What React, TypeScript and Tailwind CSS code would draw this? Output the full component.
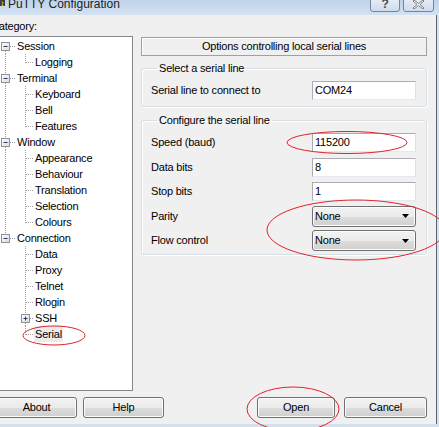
import React from 'react';

type Root = { label: string; children: { label: string; plus?: boolean; selected?: boolean }[] };

const tree: Root[] = [
  { label: 'Session', children: [{ label: 'Logging' }] },
  { label: 'Terminal', children: [{ label: 'Keyboard' }, { label: 'Bell' }, { label: 'Features' }] },
  {
    label: 'Window',
    children: [
      { label: 'Appearance' },
      { label: 'Behaviour' },
      { label: 'Translation' },
      { label: 'Selection' },
      { label: 'Colours' },
    ],
  },
  {
    label: 'Connection',
    children: [
      { label: 'Data' },
      { label: 'Proxy' },
      { label: 'Telnet' },
      { label: 'Rlogin' },
      { label: 'SSH', plus: true },
      { label: 'Serial', selected: true },
    ],
  },
];

const dot = { stroke: '#a0a0a0', strokeWidth: 1, strokeDasharray: '1 1' };

function Expander({ x, open }: { x: number; open: boolean }) {
  return (
    <g>
      <defs>
        <linearGradient id="exp" x1="0" y1="0" x2="1" y2="1">
          <stop offset="0" stopColor="#ffffff" />
          <stop offset="1" stopColor="#d8d8d8" />
        </linearGradient>
      </defs>
      <rect x={x + 0.5} y={4.5} width={8} height={8} fill="url(#exp)" stroke="#919191" />
      <line x1={x + 2.5} y1={8.5} x2={x + 6.5} y2={8.5} stroke="#1f3c6b" />
      {!open && <line x1={x + 4.5} y1={6.5} x2={x + 4.5} y2={10.5} stroke="#1f3c6b" />}
    </g>
  );
}

function RootGutter({ first, last }: { first: boolean; last: boolean }) {
  return (
    <svg width="17" height="16" className="shrink-0">
      {!first && <line x1="5.5" y1="0" x2="5.5" y2="4" {...dot} />}
      {!last && <line x1="5.5" y1="13" x2="5.5" y2="16" {...dot} />}
      <line x1="10" y1="8.5" x2="16" y2="8.5" {...dot} />
      <Expander x={1} open />
    </svg>
  );
}

function ChildGutter({ trunk, last, plus }: { trunk: boolean; last: boolean; plus?: boolean }) {
  return (
    <svg width="35" height="16" className="shrink-0">
      {trunk && <line x1="5.5" y1="0" x2="5.5" y2="16" {...dot} />}
      {plus ? (
        <>
          <line x1="25.5" y1="0" x2="25.5" y2="4" {...dot} />
          {!last && <line x1="25.5" y1="13" x2="25.5" y2="16" {...dot} />}
          <line x1="30" y1="8.5" x2="34" y2="8.5" {...dot} />
          <Expander x={21} open={false} />
        </>
      ) : (
        <>
          <line x1="25.5" y1="0" x2="25.5" y2={last ? 9 : 16} {...dot} />
          <line x1="26" y1="8.5" x2="34" y2="8.5" {...dot} />
        </>
      )}
    </svg>
  );
}

function Tree() {
  return (
    <div className="h-[355px] w-[133px] border border-l-0 border-[#828790] bg-white pt-px">
      {tree.map((root, ri) => (
        <div key={root.label}>
          <div className="flex h-4 items-center">
            <RootGutter first={ri === 0} last={ri === tree.length - 1} />
            <span className="leading-4">{root.label}</span>
          </div>
          {root.children.map((c, ci) => (
            <div key={c.label} className="flex h-4 items-center">
              <ChildGutter trunk={ri !== tree.length - 1} last={ci === root.children.length - 1} plus={c.plus} />
              <span className={c.selected ? 'bg-[#ebebeb] px-px leading-4 -ml-px' : 'leading-4'}>{c.label}</span>
            </div>
          ))}
        </div>
      ))}
    </div>
  );
}

const btn =
  'h-[21px] rounded-[3px] border border-[#707070] bg-[linear-gradient(to_bottom,#f2f2f2_0%,#ebebeb_50%,#dddddd_50%,#cfcfcf_100%)] shadow-[inset_0_0_0_1px_#fcfcfc] text-center leading-[19px]';

function TextBox({ value }: { value: string }) {
  return (
    <div className="h-[19px] w-[104px] border border-[#abadb3] border-b-[#e3e9ef] border-r-[#dbdfe6] bg-white pl-[2px] leading-[17px]">
      {value}
    </div>
  );
}

function Combo({ value }: { value: string }) {
  return (
    <div className={`${btn} flex w-[104px] items-center justify-between pl-[2px] pr-[6px] text-left`}>
      <span>{value}</span>
      <svg width="7" height="4" viewBox="0 0 7 4">
        <path d="M0 0h7L3.5 4z" fill="#000" />
      </svg>
    </div>
  );
}

function Row({ label, children }: { label: string; children: React.ReactNode }) {
  return (
    <div className="flex h-[19px] items-center justify-between">
      <span>{label}</span>
      {children}
    </div>
  );
}

function Group({ title, children, className }: { title: string; children: React.ReactNode; className?: string }) {
  return (
    <fieldset
      className={`rounded-[3px] border border-[#d5dfe5] pl-[9px] pr-[10px] shadow-[inset_1px_1px_0_#fff,1px_1px_0_#fff] ${className ?? ''}`}
    >
      <legend className="ml-[6px] px-[2px] leading-[13px]">{title}</legend>
      {children}
    </fieldset>
  );
}

function Marks() {
  // red hand-drawn circles on top of the dialog
  return (
    <svg className="pointer-events-none absolute inset-0" width="439" height="427">
      <g fill="none" stroke="#e0222a" strokeWidth="1">
        <ellipse cx="54" cy="335.5" rx="31" ry="9.5" />
        <ellipse cx="347" cy="142.5" rx="60" ry="11" />
        <ellipse cx="356" cy="230" rx="89" ry="30" />
        <ellipse cx="293" cy="409" rx="46" ry="22" />
      </g>
    </svg>
  );
}

export default function App() {
  return (
    <div
      className="relative h-[427px] w-[439px] overflow-hidden bg-[#d3e0ee] text-[11px] tracking-[-0.2px] text-black"
      style={{ fontFamily: '"Liberation Sans", Arial, sans-serif' }}
    >
      {/* caption */}
      <div className="flex h-[15px] items-start bg-linear-to-b from-[#c0d3e9] to-[#d4e2f1]">
        <svg width="7" height="9" className="mt-0 shrink-0">
          <rect x="0" y="0" width="5" height="6" fill="#3b3b3b" />
          <path d="M1 1l3 2-2 1 3 3-4-2 2-1z" fill="#f4d327" />
        </svg>
        <span className="-mt-[2px] ml-[1px] text-[12px] leading-3 tracking-normal text-[#1e1e1e]">PuTTY Configuration</span>
        <div className="ml-auto mr-[5px] flex gap-[3px]">
          <div className="-mt-[4px] flex h-[16px] w-[30px] items-end justify-center rounded-b-[3px] border border-[#75849a] bg-linear-to-b from-[#e9eff7] to-[#cfdcec] pb-[1px] text-[12px] font-bold leading-3 text-[#4a4a4a]">
            ?
          </div>
          <div className="-mt-[4px] flex h-[16px] w-[31px] items-end justify-center rounded-b-[3px] border border-[#75849a] bg-linear-to-b from-[#e9eff7] to-[#cfdcec] pb-[2px]">
            <svg width="11" height="9" viewBox="0 0 11 9">
              <path d="M1 0l4.5 3.5L10 0l1 1-4 3.5 4 3.5-1 1-4.5-3.5L1 9 0 8l4-3.5L0 1z" fill="#f4f4f4" stroke="#555" strokeWidth="0.7" />
            </svg>
          </div>
        </div>
      </div>

      {/* client area */}
      <div className="h-[409px] w-[437px] border-r border-[#5f6670] bg-[#f0f0f0]">
        <div className="flex">
          <div className="flex flex-col">
            <div className="ml-[-9px] mt-[5px] h-[16px] leading-[13px]">Category:</div>
            <Tree />
          </div>

          <div className="ml-[8px] mt-[22px] flex w-[286px] flex-col">
            <div className="h-[19px] border border-[#a0a0a0] text-center leading-[17px] shadow-[inset_1px_1px_0_#fff]">
              Options controlling local serial lines
            </div>

            <Group title="Select a serial line" className="mt-[6px] pb-[6px] pt-[6px]">
              <Row label="Serial line to connect to">
                <TextBox value="COM24" />
              </Row>
            </Group>

            <Group title="Configure the serial line" className="mt-[7px] pb-[4px] pt-[6px]">
              <div className="flex flex-col gap-[5.5px]">
                <Row label="Speed (baud)">
                  <TextBox value="115200" />
                </Row>
                <Row label="Data bits">
                  <TextBox value="8" />
                </Row>
                <Row label="Stop bits">
                  <TextBox value="1" />
                </Row>
                <Row label="Parity">
                  <Combo value="None" />
                </Row>
                <Row label="Flow control">
                  <Combo value="None" />
                </Row>
              </div>
            </Group>
          </div>
        </div>

        <div className="mt-[6px] flex">
          <button className={`${btn} ml-[-4px] w-[81px]`}>About</button>
          <button className={`${btn} ml-[6px] w-[81px]`}>Help</button>
          <button className={`${btn} ml-[93px] w-[78px]`}>Open</button>
          <button className={`${btn} ml-[9px] w-[83px]`}>Cancel</button>
        </div>
      </div>

      <Marks />
    </div>
  );
}
